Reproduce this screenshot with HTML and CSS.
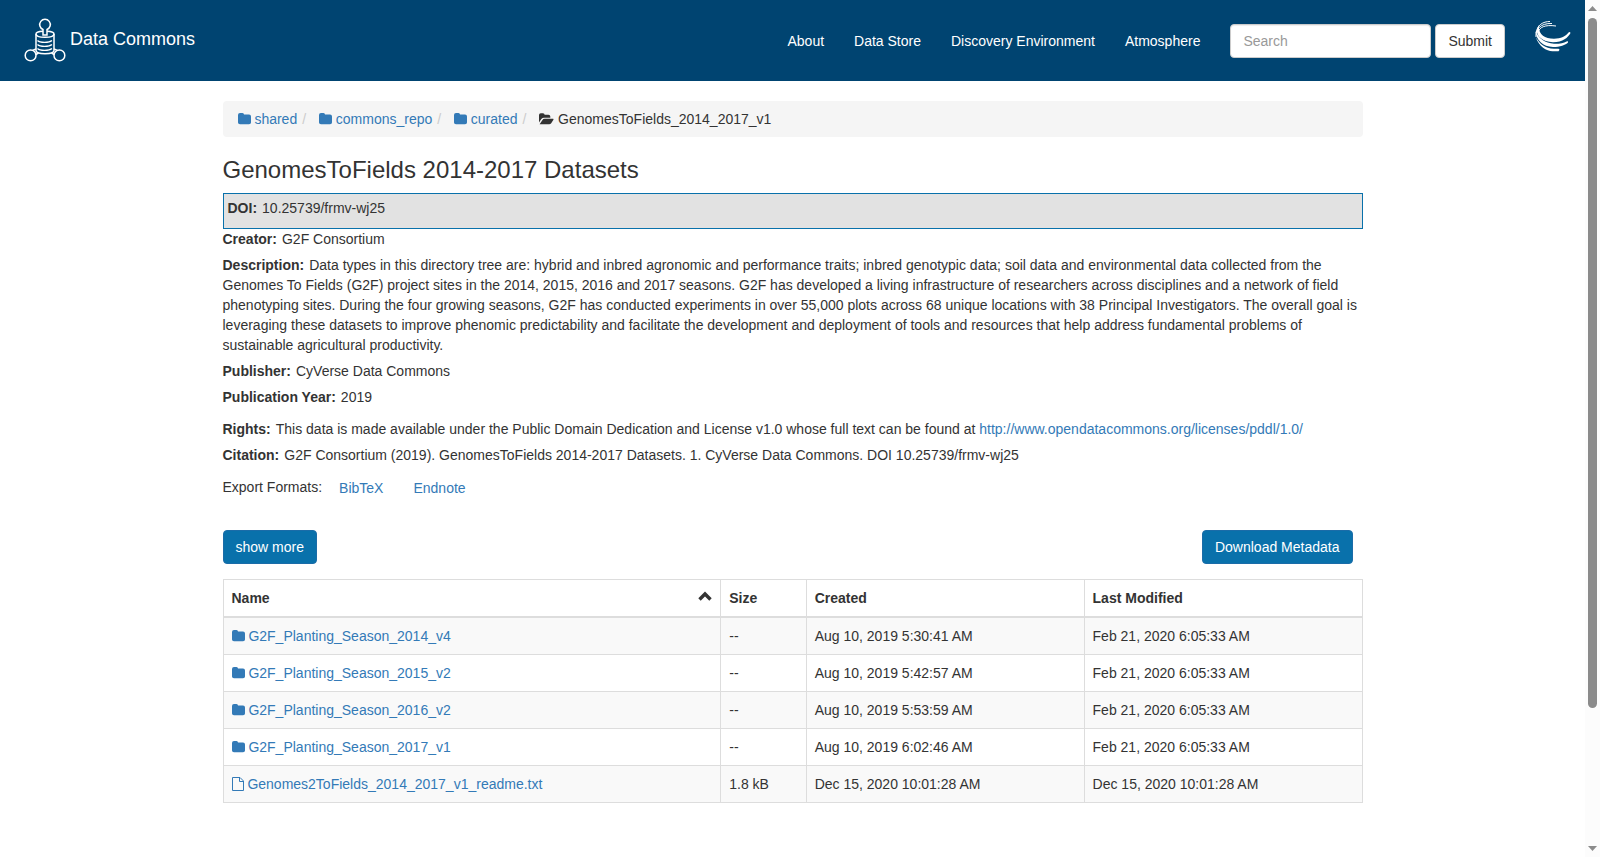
FILE: index.html
```html
<!DOCTYPE html>
<html lang="en">
<head>
    <meta charset="UTF-8">
    <meta name="viewport" content="width=device-width, initial-scale=1.0">
    <title>GenomesToFields 2014-2017 Datasets</title>
    <link rel="stylesheet" href="styles.css">
</head>
<body>

    <!-- shared icons -->
    <svg class="sprite" aria-hidden="true">
        <symbol id="folder" viewBox="0 0 13 12">
            <path d="M0 2Q0 0 2 0H4.500Q6 0 6 1.500H11Q13 1.500 13 3.500V9.500Q13 11.300 11 11.300H2Q0 11.300 0 9.500Z"/>
        </symbol>
        <symbol id="folder-open" viewBox="0 0 15 12">
            <path d="M0 9.500V2Q0 .2 1.800 .2H4Q5.600 .2 5.600 1.700H9.500Q11.300 1.700 11.300 3.500V4.800H5Q3.300 4.800 2.300 6Z"/>
            <path d="M0.600 11.300L3.300 7.200Q4.200 5.800 5.700 5.800H14Q15 5.800 14.300 7L12.200 10.200Q11.400 11.300 10.200 11.300Z"/>
        </symbol>
        <symbol id="file" viewBox="0 0 12 14">
            <path fill="none" stroke="currentColor" d="M.5 .5H8L11.500 4V13.500H.5ZM7.500 .5V4.500H11.500"/>
        </symbol>
    </svg>

    <nav class="navbar">
        <a class="brand" href="#">
            <svg class="brand-logo" viewBox="0 0 42 44" aria-hidden="true">
                <g fill="none" stroke="#fff" stroke-width="1.500">
                    <path d="M19 17V11.500A5.300 5.300 0 1 1 23 11.500V17Z"/>
                    <path d="M19 13.300C14.500 13.500 12 14.600 12 16C12 18 16 19.300 21 19.300S30 18 30 16C30 14.600 27.500 13.500 23 13.300"/>
                    <path d="M12 16V32.500C12 34.500 16 35.700 21 35.700S30 34.500 30 32.500V16"/>
                    <path stroke-width="1.200" d="M13.500 22.500C16 25 25 25 28 22.500M13.500 26.500C16 29 25 29 28 26.500M13.500 30.500C16 33 25 33 28 30.500"/>
                    <circle cx="6.600" cy="37.400" r="5.400"/>
                    <circle cx="35.400" cy="37.400" r="5.400"/>
                    <path d="M8.500 32.400L12 31M11.800 36.500L14.500 35M33.500 32.400L30 31M30.200 36.500L27.500 35"/>
                </g>
            </svg>
            <span>Data Commons</span>
        </a>
        <div class="nav-right">
            <ul class="nav-links">
                <li><a href="#">About</a></li>
                <li><a href="#">Data Store</a></li>
                <li><a href="#">Discovery Environment</a></li>
                <li><a href="#">Atmosphere</a></li>
            </ul>
            <form class="search">
                <input type="text" placeholder="Search" aria-label="Search">
                <button type="button" class="btn btn-default">Submit</button>
            </form>
            <a class="cyverse" href="#" aria-label="CyVerse">
                <svg viewBox="0 0 36 32" aria-hidden="true">
                    <g fill="#fff">
                        <path d="M4 5C-1 12 3 21 18 22.200C28 22.200 33 17.500 35.500 13Q35 11.500 33.500 12.500C31 16 26 18.700 19 18.700C9 18.500 3 14 4 5Z"/>
                        <path d="M.5 11C1 20 8 26.700 18 27C25 27 30.500 25 33 22.500Q33.500 20.500 31.500 21.500C29 23 24 24 19 23.800C10 23 4 19 .5 11Z"/>
                        <path d="M.8 17C4 27 12 31.500 18 31.200H23.500Q25.500 29.500 23.500 28.800H19C10 28 5 25 .8 17Z"/>
                    </g>
                    <path fill="none" stroke="#fff" d="M1 17C0 10 5 3 17 3.500M1.200 13C2 5 8 1.500 15 1.500M3 13C4 7 10 4.500 21 6"/>
                </svg>
            </a>
        </div>
    </nav>

    <main class="container">
        <ol class="breadcrumb">
            <li><a href="#"><svg class="icon-folder"><use href="#folder"/></svg> shared</a></li>
            <li><a href="#"><svg class="icon-folder"><use href="#folder"/></svg> commons_repo</a></li>
            <li><a href="#"><svg class="icon-folder"><use href="#folder"/></svg> curated</a></li>
            <li><svg class="icon-open"><use href="#folder-open"/></svg> GenomesToFields_2014_2017_v1</li>
        </ol>

        <h3>GenomesToFields 2014-2017 Datasets</h3>

        <div class="doi"><b>DOI:</b>10.25739/frmv-wj25</div>
        <div class="metadata">
            <p><b>Creator:</b>G2F Consortium</p>
            <p><b>Description:</b>Data types in this directory tree are: hybrid and inbred agronomic and performance traits; inbred genotypic data; soil data and environmental data collected from the Genomes To Fields (G2F) project sites in the 2014, 2015, 2016 and 2017 seasons. G2F has developed a living infrastructure of researchers across disciplines and a network of field phenotyping sites. During the four growing seasons, G2F has conducted experiments in over 55,000 plots across 68 unique locations with 38 Principal Investigators. The overall goal is leveraging these datasets to improve phenomic predictability and facilitate the development and deployment of tools and resources that help address fundamental problems of sustainable agricultural productivity.</p>
            <p><b>Publisher:</b>CyVerse Data Commons</p>
            <p><b>Publication Year:</b>2019</p>
        </div>
        <div class="metadata">
            <p><b>Rights:</b>This data is made available under the Public Domain Dedication and License v1.0 whose full text can be found at <a href="#">http://www.opendatacommons.org/licenses/pddl/1.0/</a></p>
            <p><b>Citation:</b>G2F Consortium (2019). GenomesToFields 2014-2017 Datasets. 1. CyVerse Data Commons. DOI 10.25739/frmv-wj25</p>
        </div>
        <div class="export">
            <span>Export Formats:</span>
            <button type="button" class="btn btn-link">BibTeX</button>
            <button type="button" class="btn btn-link">Endnote</button>
        </div>

        <div class="actions">
            <button type="button" class="btn btn-primary">show more</button>
            <button type="button" class="btn btn-primary">Download Metadata</button>
        </div>

        <table class="files">
            <colgroup>
                <col class="col-name">
                <col class="col-size">
                <col class="col-date">
                <col class="col-date">
            </colgroup>
            <thead>
                <tr>
                    <th>
                        <div class="sorted">Name
                            <svg class="icon-sort" viewBox="0 0 14 10" aria-hidden="true"><path fill="none" stroke="currentColor" stroke-width="3.400" d="M1.500 8.500L7 3L12.500 8.500"/></svg>
                        </div>
                    </th>
                    <th>Size</th>
                    <th>Created</th>
                    <th>Last Modified</th>
                </tr>
            </thead>
            <tbody>
                <tr>
                    <td><a href="#"><svg class="icon-folder"><use href="#folder"/></svg> G2F_Planting_Season_2014_v4</a></td>
                    <td>--</td>
                    <td>Aug 10, 2019 5:30:41 AM</td>
                    <td>Feb 21, 2020 6:05:33 AM</td>
                </tr>
                <tr>
                    <td><a href="#"><svg class="icon-folder"><use href="#folder"/></svg> G2F_Planting_Season_2015_v2</a></td>
                    <td>--</td>
                    <td>Aug 10, 2019 5:42:57 AM</td>
                    <td>Feb 21, 2020 6:05:33 AM</td>
                </tr>
                <tr>
                    <td><a href="#"><svg class="icon-folder"><use href="#folder"/></svg> G2F_Planting_Season_2016_v2</a></td>
                    <td>--</td>
                    <td>Aug 10, 2019 5:53:59 AM</td>
                    <td>Feb 21, 2020 6:05:33 AM</td>
                </tr>
                <tr>
                    <td><a href="#"><svg class="icon-folder"><use href="#folder"/></svg> G2F_Planting_Season_2017_v1</a></td>
                    <td>--</td>
                    <td>Aug 10, 2019 6:02:46 AM</td>
                    <td>Feb 21, 2020 6:05:33 AM</td>
                </tr>
                <tr>
                    <td><a href="#"><svg class="icon-file"><use href="#file"/></svg> Genomes2ToFields_2014_2017_v1_readme.txt</a></td>
                    <td>1.8 kB</td>
                    <td>Dec 15, 2020 10:01:28 AM</td>
                    <td>Dec 15, 2020 10:01:28 AM</td>
                </tr>
            </tbody>
        </table>
    </main>

    <div class="scrollbar" aria-hidden="true">
        <svg class="arrow" viewBox="0 0 9 5"><path d="M0 5L4.500 0L9 5Z"/></svg>
        <div class="track"><div class="thumb"></div></div>
        <svg class="arrow" viewBox="0 0 9 5"><path d="M0 0L4.500 5L9 0Z"/></svg>
    </div>

</body>
</html>
```
FILE: styles.css
```css
* {
    box-sizing: border-box;
}

body {
    margin: 0;
    padding-right: 15px;
    background-color: #fff;
    color: #333;
    font-family: "Liberation Sans", Arial, sans-serif;
    font-size: 14px;
    line-height: 20px;
}

a {
    color: #337ab7;
    text-decoration: none;
}

a:hover {
    text-decoration: underline;
}

.sprite {
    display: none;
}

/* navbar */
.navbar {
    display: flex;
    justify-content: space-between;
    align-items: center;
    min-height: 81px;
    padding: 0 14px 0 24px;
    background-color: #004471;
}

.brand {
    display: flex;
    align-items: center;
    gap: 4px;
    padding-bottom: 1px;
    color: #fff;
    font-size: 18px;
}

.brand span {
    padding-bottom: 3px;
}

.brand-logo {
    width: 42px;
    height: 44px;
}

.nav-right {
    display: flex;
    align-items: center;
}

.nav-links {
    display: flex;
    gap: 30px;
    margin: 0 30px 0 0;
    padding: 0;
    list-style: none;
}

.nav-links a {
    color: #fff;
}

.search {
    display: flex;
    gap: 4px;
}

.search input {
    width: 201px;
    height: 34px;
    padding: 6px 12px;
    border: 1px solid #ccc;
    border-radius: 4px;
    background-color: #fff;
    color: #555;
    font: inherit;
    box-shadow: inset 0 1px 1px rgba(0, 0, 0, 0.075);
}

.search input::placeholder {
    color: #999;
}

.cyverse {
    padding-bottom: 9px;
    margin-left: 30px;
}

.cyverse svg {
    display: block;
    width: 36px;
    height: 32px;
}

/* buttons */
.btn {
    padding: 6px 12px;
    border: 1px solid transparent;
    border-radius: 4px;
    background-color: transparent;
    font: inherit;
    cursor: pointer;
}

.btn-default {
    border-color: #ccc;
    background-color: #fff;
    color: #333;
}

.btn-primary {
    border-color: #1b6ca8;
    background-color: #0971ab;
    color: #fff;
}

.btn-link {
    color: #337ab7;
}

/* content */
.container {
    max-width: 1170px;
    margin: 20px auto;
    padding: 0 15px;
}

.breadcrumb {
    display: flex;
    flex-wrap: wrap;
    margin: 0 0 20px;
    padding: 8px 15px;
    border-radius: 4px;
    background-color: #f5f5f5;
    list-style: none;
}

.breadcrumb li + li::before {
    content: "/\00a0\00a0";
    padding: 0 5px;
    color: #ccc;
}

.icon-folder,
.icon-open,
.icon-file {
    display: inline-block;
    width: 13px;
    height: 12px;
    fill: currentColor;
    vertical-align: -1px;
}

.icon-open {
    width: 15px;
}

.icon-file {
    width: 12px;
    height: 14px;
    vertical-align: -2px;
}

h3 {
    margin: 0 0 10px;
    font-size: 24px;
    font-weight: 500;
    line-height: 26px;
}

b {
    margin-right: 5px;
}

.doi {
    padding: 4px 4px 10px;
    border: 1px solid #0971ab;
    background-color: #e2e2e2;
}

.metadata + .metadata {
    margin-top: 12px;
}

.metadata p {
    margin: 0 0 6px;
}

.export {
    display: flex;
    gap: 4px;
    align-items: center;
    margin-bottom: 25px;
}

.export span {
    padding-bottom: 2px;
}

.actions {
    display: flex;
    justify-content: space-between;
    margin-bottom: 15px;
    padding-right: 10px;
}

/* file listing */
.files {
    width: 100%;
    border: 1px solid #ddd;
    border-collapse: collapse;
    table-layout: fixed;
}

.col-name {
    width: 43.7%;
}

.col-size {
    width: 7.5%;
}

.col-date {
    width: 24.4%;
}

.files th,
.files td {
    padding: 8px;
    border: 1px solid #ddd;
    text-align: left;
}

.files th {
    border-bottom-width: 2px;
}

.files tbody tr:nth-child(odd) {
    background-color: #f9f9f9;
}

.sorted {
    display: flex;
    justify-content: space-between;
}

.icon-sort {
    width: 14px;
    height: 10px;
    margin: 3px 0;
}

/* page scrollbar */
.scrollbar {
    position: fixed;
    top: 0;
    right: 0;
    bottom: 0;
    display: flex;
    flex-direction: column;
    align-items: center;
    width: 15px;
    padding: 6px 0;
    background-color: #fcfcfc;
}

.arrow {
    width: 9px;
    height: 5px;
    fill: #8b8b8b;
}

.track {
    flex: 1;
    width: 9px;
    margin: 7px 0;
}

.thumb {
    height: 84%;
    border-radius: 5px;
    background-color: #8b8b8b;
}
```
